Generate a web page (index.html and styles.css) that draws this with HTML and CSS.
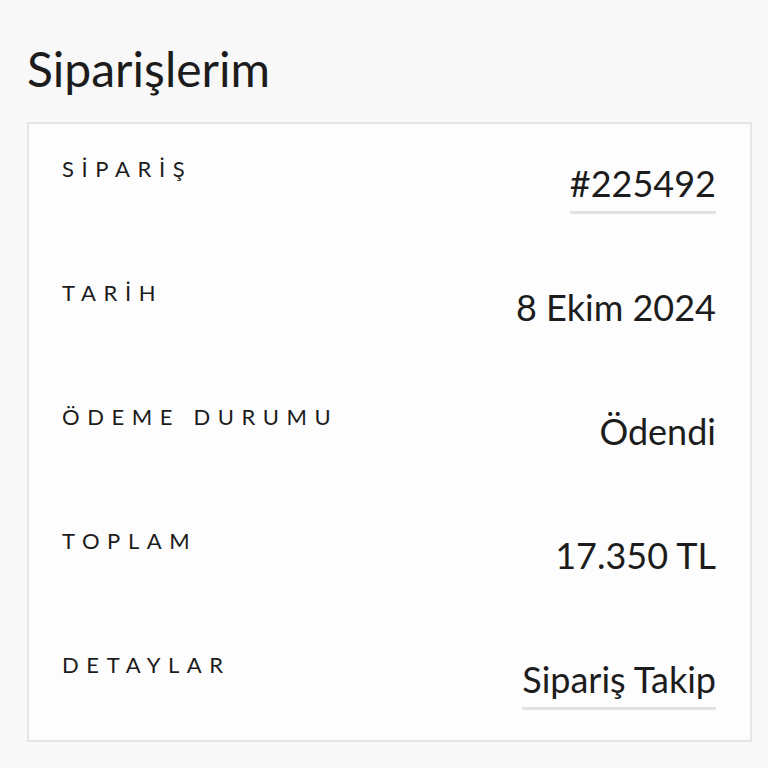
FILE: index.html
```html
<!DOCTYPE html>
<html lang="tr">
<head>
    <meta charset="UTF-8">
    <meta name="viewport" content="width=device-width, initial-scale=1.0">
    <title>Siparişlerim</title>
    <link rel="stylesheet" href="styles.css">
</head>
<body>
    <h1 class="page-title">Siparişlerim</h1>

    <div class="order-card">
        <div class="order-row">
            <span class="order-label">Sipariş</span>
            <a class="order-value link" href="#">#225492</a>
        </div>
        <div class="order-row">
            <span class="order-label">Tarih</span>
            <span class="order-value">8 Ekim 2024</span>
        </div>
        <div class="order-row">
            <span class="order-label">Ödeme Durumu</span>
            <span class="order-value">Ödendi</span>
        </div>
        <div class="order-row">
            <span class="order-label">Toplam</span>
            <span class="order-value">17.350 TL</span>
        </div>
        <div class="order-row">
            <span class="order-label">Detaylar</span>
            <a class="order-value link" href="#">Sipariş Takip</a>
        </div>
    </div>
</body>
</html>
```

FILE: styles.css
```css
body {
    margin: 0;
    padding: 0 16px 0 27px;
    font-family: Lato, "Open Sans", sans-serif;
    background-color: #f8f8f8;
    color: #1c1c1c;
}
.page-title {
    margin: 0 0 25px 0;
    padding-top: 41px;
    font-size: 48px;
    font-weight: 400;
    line-height: 56px;
}
.order-card {
    background-color: #fdfdfd;
    border: 2px solid #e6e6e6;
    padding: 33px 34px 30px 33px;
}
.order-row {
    display: flex;
    justify-content: space-between;
    align-items: flex-start;
    height: 124px;
}
.order-row:last-child {
    height: auto;
}
.order-label {
    font-size: 22px;
    line-height: 24px;
    letter-spacing: 7.6px;
    text-transform: uppercase;
    color: #1c1c1c;
}
.order-value {
    margin-top: 5px;
    font-size: 36px;
    line-height: 42px;
    color: #1c1c1c;
    text-decoration: none;
}
.link {
    border-bottom: 3px solid #e2e2e2;
    padding-bottom: 7px;
}
```
